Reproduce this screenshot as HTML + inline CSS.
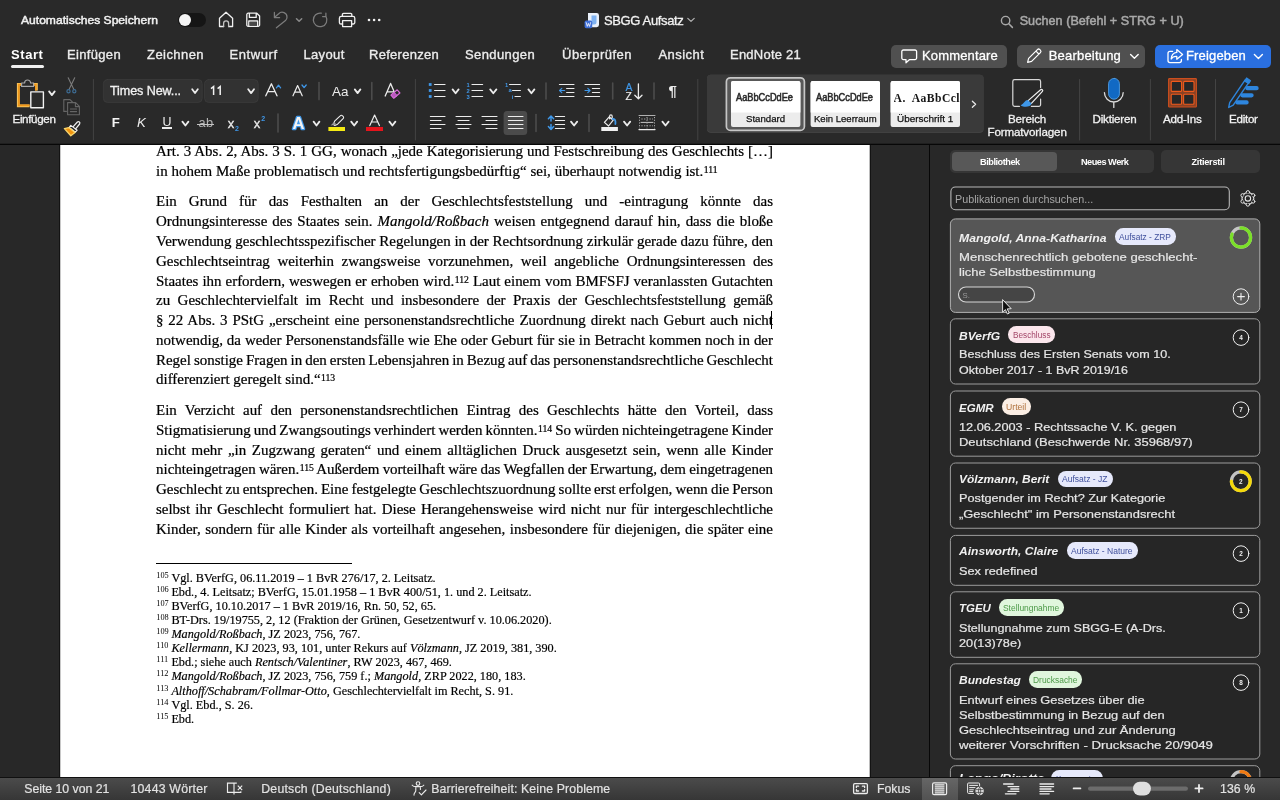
<!DOCTYPE html>
<html lang="de"><head><meta charset="utf-8"><title>SBGG Aufsatz</title>
<style>

*{box-sizing:border-box}
html,body{margin:0;padding:0}
body{will-change:transform;width:1280px;height:800px;overflow:hidden;position:relative;background:#292929;font-family:"Liberation Sans",sans-serif;color:#fff}
.t{position:absolute;white-space:pre;line-height:1;display:block}
.a{position:absolute;display:block}
svg{position:absolute;left:0;top:0;overflow:visible}
.ln{position:absolute;left:156px;width:617px;height:19.78px;line-height:19.78px;font-family:"Liberation Serif",serif;font-size:14.96px;color:#000;white-space:nowrap;-webkit-text-stroke:0.22px #000}
.ln sup{font-size:9.7px;line-height:0;vertical-align:baseline;position:relative;top:-2.8px;margin-left:.5px}
.fn{position:absolute;left:171.4px;height:14.1px;line-height:14.1px;font-family:"Liberation Serif",serif;font-size:12.24px;color:#000;white-space:pre;-webkit-text-stroke:0.18px #000}
.fnn{position:absolute;left:156.3px;font-family:"Liberation Serif",serif;font-size:8.3px;line-height:1;color:#000}
.card{position:absolute;left:949.75px;width:310px;border:1px solid #9a9a9a;border-radius:5px;background:#262626}
.badge{position:absolute;height:16.5px;border-radius:8.25px}

</style></head>
<body>
<div class="a" style="left:0;top:0;width:1280px;height:143px;background:#292929"></div>
<span class="t" style="left:21.00px;top:15px;font-size:11.3px;transform:scaleX(1.0694);transform-origin:0 0;-webkit-text-stroke:0.45px;color:#f2f2f2;">Automatisches Speichern</span>
<span class="t" style="left:604.00px;top:14px;font-size:13px;letter-spacing:-0.369px;-webkit-text-stroke:0.3px;color:#f2f2f2;">SBGG Aufsatz</span>
<span class="t" style="left:1019.70px;top:15px;font-size:12.6px;letter-spacing:0.037px;-webkit-text-stroke:0.5px;color:#a8a8a8;">Suchen (Befehl + STRG + U)</span>
<span class="t" style="left:11.00px;top:48px;font-size:13px;font-weight:bold;letter-spacing:0.575px;color:#fff;">Start</span>
<span class="t" style="left:67.00px;top:48px;font-size:13px;letter-spacing:0.334px;-webkit-text-stroke:0.35px;color:#ececec;">Einfügen</span>
<span class="t" style="left:147.00px;top:48px;font-size:13px;letter-spacing:0.439px;-webkit-text-stroke:0.35px;color:#ececec;">Zeichnen</span>
<span class="t" style="left:229.40px;top:48px;font-size:13px;letter-spacing:0.617px;-webkit-text-stroke:0.35px;color:#ececec;">Entwurf</span>
<span class="t" style="left:303.40px;top:48px;font-size:13px;letter-spacing:0.376px;-webkit-text-stroke:0.35px;color:#ececec;">Layout</span>
<span class="t" style="left:369.00px;top:48px;font-size:13px;letter-spacing:0.278px;-webkit-text-stroke:0.35px;color:#ececec;">Referenzen</span>
<span class="t" style="left:465.00px;top:48px;font-size:13px;letter-spacing:0.387px;-webkit-text-stroke:0.35px;color:#ececec;">Sendungen</span>
<span class="t" style="left:562.00px;top:48px;font-size:13px;letter-spacing:0.495px;-webkit-text-stroke:0.35px;color:#ececec;">Überprüfen</span>
<span class="t" style="left:658.40px;top:48px;font-size:13px;letter-spacing:0.480px;-webkit-text-stroke:0.35px;color:#ececec;">Ansicht</span>
<span class="t" style="left:730.00px;top:48px;font-size:13px;letter-spacing:0.233px;-webkit-text-stroke:0.35px;color:#ececec;">EndNote 21</span>
<div class="a" style="left:11px;top:65px;width:33px;height:3px;border-radius:1.5px;background:#f0f0f0"></div>
<div class="a" style="left:891px;top:44.5px;width:115.5px;height:23px;border-radius:5px;background:#505050"></div>
<div class="a" style="left:1017px;top:44.5px;width:128px;height:23px;border-radius:5px;background:#505050"></div>
<div class="a" style="left:1155px;top:44.5px;width:115.5px;height:23px;border-radius:5px;background:#2a6fdf"></div>
<span class="t" style="left:922.00px;top:49px;font-size:13px;letter-spacing:0.158px;-webkit-text-stroke:0.3px;color:#fff;">Kommentare</span>
<span class="t" style="left:1048.75px;top:49px;font-size:13px;letter-spacing:0.193px;-webkit-text-stroke:0.3px;color:#fff;">Bearbeitung</span>
<span class="t" style="left:1186.00px;top:49px;font-size:13px;letter-spacing:0.161px;-webkit-text-stroke:0.3px;color:#fff;">Freigeben</span>
<svg width="1280" height="75" viewBox="0 0 1280 75" fill="none" stroke-linecap="round" stroke-linejoin="round"><rect x="178" y="13" width="28" height="14" rx="7" fill="#151515"/><circle cx="185" cy="20" r="6" fill="#f4f4f4"/><path d="M223.6 26.5 H219.5 V18.2 L226 12.2 L232.6 18.2 V26.5 H228.6" stroke="#f0f0f0" stroke-width="1.3"/><path d="M223.6 26.5 V23.4 a2.5 2.5 0 0 1 5 0 V26.5" stroke="#c4c4c4" stroke-width="1.3"/><path d="M246.8 14.6 a1.4 1.4 0 0 1 1.4 -1.4 H256.8 L259.6 16 V24.9 a1.4 1.4 0 0 1 -1.4 1.4 H248.2 a1.4 1.4 0 0 1 -1.4 -1.4 Z M249.4 13.4 V17.4 H256.2 V13.4 M248.8 26.2 V21 H257.6 V26.2" stroke="#f0f0f0" stroke-width="1.3"/><rect x="249.6" y="21.8" width="7.2" height="3.8" fill="#484848"/><path d="M274.4 12.4 V17.5 H279.6 M274.6 17.3 L278.7 13.7 A4.8 4.8 0 0 1 287 17.2 A4.8 4.8 0 0 1 285.5 20.6 L276.4 27.8" stroke="#7c7c7c" stroke-width="1.25"/><path d="M296.5 18.7 L299.1 21.3 L301.7 18.7" stroke="#8a8a8a" stroke-width="1.5"/><path d="M326 16.5 A6.8 6.8 0 1 1 321.3 13.2 M325.9 13.2 V16.5 H322.6" stroke="#7c7c7c" stroke-width="1.25"/><path d="M342.4 16.4 V14.6 a1.2 1.2 0 0 1 1.2 -1.2 H350.6 a1.2 1.2 0 0 1 1.2 1.2 V16.4 M342.6 24 H341 a1.6 1.6 0 0 1 -1.6 -1.6 V18.2 a1.8 1.8 0 0 1 1.8 -1.8 H353 a1.8 1.8 0 0 1 1.8 1.8 V22.4 a1.6 1.6 0 0 1 -1.6 1.6 H351.6 M342.6 20.6 H351.6 V26.6 H342.6 Z" stroke="#f0f0f0" stroke-width="1.3"/><circle cx="369" cy="20" r="1.3" fill="#f0f0f0"/><circle cx="374.1" cy="20" r="1.3" fill="#f0f0f0"/><circle cx="379.2" cy="20" r="1.3" fill="#f0f0f0"/><path d="M588 13 h8.6 a2.4 2.4 0 0 1 2.4 2.4 v9.4 a2.4 2.4 0 0 1 -2.4 2.4 h-8.6 Z" fill="#eaf1fb"/><path d="M591.5 15.5 h5 v6.5 a2.5 2.5 0 0 1 -2.5 2.5 h-2.5 Z" fill="#7fb2f0"/><rect x="584.6" y="20.6" width="7.6" height="7.6" rx="1.6" fill="#3f6fd8"/><path d="M586.2 22.6 L587.3 26.4 L588.4 23.4 L589.5 26.4 L590.6 22.6" stroke="#fff" stroke-width="0.8"/><path d="M687.8 18.4 L691 21.4 L694.2 18.4" stroke="#b0b0b0" stroke-width="1.3"/><circle cx="1005.6" cy="20.6" r="4.2" stroke="#a8a8a8" stroke-width="1.4"/><path d="M1008.8 23.8 L1012.4 27.4" stroke="#a8a8a8" stroke-width="1.5"/><path d="M903.4 50 H915 a1.6 1.6 0 0 1 1.6 1.6 V58 a1.6 1.6 0 0 1 -1.6 1.6 H909.6 L906 62.8 V59.6 H903.4 a1.6 1.6 0 0 1 -1.6 -1.6 V51.6 a1.6 1.6 0 0 1 1.6 -1.6 Z" stroke="#fff" stroke-width="1.3"/><path d="M1027.6 62.4 L1028.6 58.4 L1037.4 49.6 a1.7 1.7 0 0 1 2.4 0 L1040.4 50.2 a1.7 1.7 0 0 1 0 2.4 L1031.6 61.4 Z M1036 51.2 L1038.8 54" stroke="#fff" stroke-width="1.2"/><path d="M1130.6 54.6 L1134.4 58.2 L1138.2 54.6" stroke="#fff" stroke-width="1.4"/><path d="M1172.6 51.4 H1170 a2 2 0 0 0 -2 2 V60.6 a2 2 0 0 0 2 2 H1179.4 a2 2 0 0 0 2 -2 V59.4" stroke="#fff" stroke-width="1.3"/><path d="M1176.8 49.6 L1182.6 54.4 L1176.8 59.2 V56.4 C1174.2 56.2 1172.4 57 1171.2 59 C1171.4 55.2 1173.4 52.8 1176.8 52.4 Z" stroke="#fff" stroke-width="1.3"/><path d="M1254.4 54.6 L1258.4 58.4 L1262.4 54.6" stroke="#fff" stroke-width="1.4"/></svg>
<svg width="1280" height="145" viewBox="0 0 1280 145" fill="none" stroke-linecap="round" stroke-linejoin="round"><path d="M93.4 79.5 V140" stroke="#444" stroke-width="1"/><path d="M415.4 79.5 V140" stroke="#444" stroke-width="1"/><path d="M697.8 79.5 V140" stroke="#444" stroke-width="1"/><path d="M1079.6 79.5 V140" stroke="#444" stroke-width="1"/><path d="M1150.4 79.5 V140" stroke="#444" stroke-width="1"/><path d="M1215.5 79.5 V140" stroke="#444" stroke-width="1"/><path d="M319 82.6 V99.6" stroke="#4c4c4c" stroke-width="1.6"/><path d="M371.8 82.6 V99.6" stroke="#4c4c4c" stroke-width="1.6"/><path d="M278 114 V132" stroke="#4c4c4c" stroke-width="1.6"/><path d="M546 83 V99" stroke="#4c4c4c" stroke-width="1.6"/><path d="M612.7 83 V99" stroke="#4c4c4c" stroke-width="1.6"/><path d="M654 83 V99" stroke="#4c4c4c" stroke-width="1.6"/><path d="M536 114.5 V131.5" stroke="#4c4c4c" stroke-width="1.6"/><path d="M589 114.5 V131.5" stroke="#4c4c4c" stroke-width="1.6"/><path d="M21.6 84.3 H18.3 V105.8 H29.6 M33.6 84.3 H36.4 V90.6" stroke="#f7c45c" stroke-width="2.8" stroke-linecap="butt" stroke-linejoin="miter"/><path d="M21.6 84.7 H18.8 V105.3 H29.6 M33.6 84.7 H35.9 V90.6" stroke="#f0961a" stroke-width="1.7" stroke-linecap="butt" stroke-linejoin="miter"/><path d="M21.6 86.4 V83 H24.6 a3 3 0 0 1 6 0 H33.6 V86.4 Z" fill="#292929" stroke="#a8a8a8" stroke-width="1.2"/><rect x="30.8" y="91.9" width="12.6" height="15.8" fill="#2c2c2c" stroke="#f2f2f2" stroke-width="1.4"/><path d="M49.1 91.4 L51.9 95.1 L54.699999999999996 91.4" stroke="#ececec" stroke-width="1.8"/><path d="M68.2 77.8 L73.9 89.4 M74.7 77.8 L69 89.4" stroke="#7c7c7c" stroke-width="1.1"/><circle cx="68.5" cy="91.3" r="1.6" stroke="#3d6c94" stroke-width="1.2"/><circle cx="74.3" cy="91.3" r="1.6" stroke="#3d6c94" stroke-width="1.2"/><path d="M66.4 111.4 H63.8 V99.6 H70 L72.4 102" stroke="#666" stroke-width="1.1"/><path d="M67.6 102.6 H75.6 L79.4 106.4 V114.8 H67.6 Z M75.4 102.8 V106.6 H79.2 M70.4 109 H76.6 M70.4 111.6 H76.6" stroke="#666" stroke-width="1.1"/><path d="M73.2 126.6 L77.4 122 a1.5 1.5 0 0 1 2.2 2 L75.6 128.8" stroke="#f2f2f2" stroke-width="1.2"/><path d="M70.8 125.4 L77.2 130.2 L75.4 132.2 L69.2 127.4 Z" stroke="#f2f2f2" stroke-width="1.1"/><path d="M68.8 127.6 L75 132.4 L70.8 135.8 L64.4 128.6 Z" fill="#f0930f" stroke="#f8d66c" stroke-width="1.3"/><rect x="103.4" y="79.6" width="98.8" height="22.8" rx="4" fill="#323232" stroke="#3c3c3c" stroke-width="0.8"/><rect x="204.6" y="79.6" width="53.6" height="22.8" rx="4" fill="#323232" stroke="#3c3c3c" stroke-width="0.8"/><path d="M192.2 89.2 L195.0 93.1 L197.8 89.2" stroke="#ececec" stroke-width="1.8"/><path d="M248.2 89.2 L251.1 93.1 L254.0 89.2" stroke="#ececec" stroke-width="1.8"/><path d="M211 88.6 L213.6 86.6 V95 M217.6 88.6 L220.2 86.6 V95" stroke="#f2f2f2" stroke-width="1.5" stroke-linejoin="miter" stroke-linecap="butt"/><path d="M265.8 95.8 L271.4 83.8 L277 95.8 M267.8 91.6 H275" stroke="#ececec" stroke-width="1.3"/><path d="M276.4 87.8 L278.5 85.2 L280.6 87.8" stroke="#3f97e8" stroke-width="1.3"/><path d="M293 95.8 L297.6 85.6 L302.2 95.8 M294.6 92.2 H300.6" stroke="#ececec" stroke-width="1.2"/><path d="M302 85 L304.1 87.6 L306.2 85" stroke="#3f97e8" stroke-width="1.3"/><path d="M354.8 89.4 L357.6 93.1 L360.40000000000003 89.4" stroke="#ececec" stroke-width="1.8"/><path d="M385.2 96 L390.6 83.4 L396 96 M387.2 91.8 H394" stroke="#ececec" stroke-width="1.3"/><path d="M397.2 89.8 L399.9 93 L393.7 98.2 L391.1 95.2 Z" fill="#292929" stroke="#d86ad8" stroke-width="1.2"/><path d="M394.3 92.5 L397 95.5 L393.7 98.2 L391.1 95.2 Z" fill="#b95abf" stroke="#d86ad8" stroke-width="1"/><text x="298.6" y="128.9" text-anchor="middle" font-family="Liberation Sans" font-weight="bold" font-size="16.6" fill="#f4f4f4" stroke="#3f97e8" stroke-width="2.4" paint-order="stroke" stroke-linejoin="round">A</text><path d="M313.59999999999997 121.6 L316.5 125.5 L319.40000000000003 121.6" stroke="#ececec" stroke-width="1.8"/><rect x="328.4" y="127" width="16.6" height="4" fill="#f5ea14"/><path d="M333.4 124.6 L334.6 121.2 L340.2 115.8 a1.6 1.6 0 0 1 2.3 0 l0.6 0.6 a1.6 1.6 0 0 1 0 2.3 L337.6 124.2 L334.8 125.4 Z" stroke="#ececec" stroke-width="1.1"/><path d="M330.6 125.6 L334 122 L336.6 124.6 Z" fill="#9a9a9a"/><path d="M351.2 121.6 L354.2 125.5 L357.2 121.6" stroke="#ececec" stroke-width="1.8"/><rect x="366" y="127" width="17" height="4" fill="#e5141c"/><path d="M369.8 125.6 L374.6 115 L379.4 125.6 M371.6 122 H377.6" stroke="#ececec" stroke-width="1.2"/><path d="M389.4 121.6 L392.4 125.5 L395.40000000000003 121.6" stroke="#ececec" stroke-width="1.8"/><path d="M182.39999999999998 121.6 L185.39999999999998 125.5 L188.4 121.6" stroke="#ececec" stroke-width="1.8"/><rect x="428.8" y="83.1" width="2.8" height="2.8" fill="#3f97e8"/><path d="M434.6 84.5 H445" stroke="#ececec" stroke-width="1.2"/><path d="M472 84.5 H482.6" stroke="#ececec" stroke-width="1.2"/><rect x="428.8" y="89.1" width="2.8" height="2.8" fill="#3f97e8"/><path d="M434.6 90.5 H445" stroke="#ececec" stroke-width="1.2"/><path d="M472 90.5 H482.6" stroke="#ececec" stroke-width="1.2"/><rect x="428.8" y="95.1" width="2.8" height="2.8" fill="#3f97e8"/><path d="M434.6 96.5 H445" stroke="#ececec" stroke-width="1.2"/><path d="M472 96.5 H482.6" stroke="#ececec" stroke-width="1.2"/><path d="M452.59999999999997 89.4 L455.6 93.3 L458.6 89.4" stroke="#ececec" stroke-width="1.8"/><path d="M490.2 89.4 L493.3 93.3 L496.40000000000003 89.4" stroke="#ececec" stroke-width="1.8"/><path d="M528.4000000000001 89.4 L531.4000000000001 93.3 L534.4 89.4" stroke="#ececec" stroke-width="1.8"/><path d="M509.6 84.5 H520.4 M512.6 90.5 H520.4 M515 96.5 H520.4" stroke="#ececec" stroke-width="1.2"/><path d="M559.4 84.5 H574 M566.6 88.5 H574 M566.6 92.5 H574 M559.4 96.5 H574" stroke="#ececec" stroke-width="1.1"/><path d="M564.6 90.5 H559.6 M561.8 88.4 L559.6 90.5 L561.8 92.6" stroke="#3f97e8" stroke-width="1.2"/><path d="M585 84.5 H599.6 M592.4 88.5 H599.6 M592.4 92.5 H599.6 M585 96.5 H599.6" stroke="#ececec" stroke-width="1.1"/><path d="M585 90.5 H590 M587.8 88.4 L590 90.5 L587.8 92.6" stroke="#3f97e8" stroke-width="1.2"/><path d="M638.4 84 V98.6 M634.8 95.2 L638.4 98.8 L642 95.2" stroke="#ececec" stroke-width="1.3"/><path d="M430.4 116.5 H445 M430.4 120.5 H441 M430.4 124.5 H445 M430.4 128.5 H441" stroke="#ececec" stroke-width="1.1"/><path d="M456 116.5 H471 M458.0 120.5 H469.0 M456 124.5 H471 M458.0 128.5 H469.0" stroke="#ececec" stroke-width="1.1"/><path d="M482 116.5 H497 M486 120.5 H497 M482 124.5 H497 M486 128.5 H497" stroke="#ececec" stroke-width="1.1"/><rect x="503.6" y="111" width="23.6" height="24" rx="3.5" fill="#4b4b4b"/><path d="M508.4 116.5 H523 M508.4 120.5 H523 M508.4 124.5 H523 M508.4 128.5 H523" stroke="#ececec" stroke-width="1.1"/><path d="M555.4 116.5 H564.6 M555.4 120.5 H564.6 M555.4 124.5 H564.6 M555.4 128.5 H564.6" stroke="#ececec" stroke-width="1.1"/><path d="M551 116.2 V121 M548.4 118.8 L551 116 L553.6 118.8 M551 124.4 V129.2 M548.4 126.6 L551 129.4 L553.6 126.6" stroke="#3f97e8" stroke-width="1.5"/><path d="M571.0 121.6 L574.0999999999999 125.5 L577.1999999999999 121.6" stroke="#ececec" stroke-width="1.8"/><rect x="601.3" y="127" width="16.6" height="4" fill="#f0f0f0"/><path d="M604.4 122.4 L609.2 116.8 L613.2 120.2 L608.6 126 Z M609.6 118.8 V116.2 a1.3 1.3 0 0 1 2.6 0 V119.6" stroke="#ececec" stroke-width="1.2"/><path d="M612.8 119 C615 118.6 615.8 121 615.4 124" stroke="#3f97e8" stroke-width="1.8"/><path d="M624.0 121.6 L627.0999999999999 125.5 L630.1999999999999 121.6" stroke="#ececec" stroke-width="1.8"/><path d="M639 129.6 H655" stroke="#ececec" stroke-width="1.4"/><path d="M639 115.5 H655" stroke="#b0b0b0" stroke-width="1"/><path d="M641 122.4 H653" stroke="#c8c8c8" stroke-width="1"/><path d="M639.5 117 V128.4 M647 117 V128.4 M654.5 117 V128.4 M641.4 119 H653 M641.4 125.8 H653" stroke="#a8a8a8" stroke-width="1" stroke-dasharray="1.2 1.5" stroke-linecap="butt"/><path d="M662.4000000000001 121.6 L665.5 125.5 L668.5999999999999 121.6" stroke="#ececec" stroke-width="1.8"/><rect x="707" y="74.8" width="276.6" height="58" rx="4" fill="#4a4a4a"/><rect x="707" y="74.8" width="276.6" height="57.2" rx="4" fill="#3a3a3a"/><rect x="726.4" y="77.8" width="78" height="52.6" rx="4" fill="#585858" stroke="#c6c6c6" stroke-width="1.7"/><rect x="731" y="80.9" width="69.4" height="46" rx="2" fill="#ececec"/><path d="M731 112.4 V82.9 a2 2 0 0 1 2 -2 H798.4 a2 2 0 0 1 2 2 V112.4 Z" fill="#fff"/><rect x="810.6" y="80.9" width="69.4" height="46" rx="2" fill="#ececec"/><path d="M810.6 112.4 V82.9 a2 2 0 0 1 2 -2 H878.0 a2 2 0 0 1 2 2 V112.4 Z" fill="#fff"/><rect x="890.6" y="80.9" width="69.4" height="46" rx="2" fill="#ececec"/><path d="M890.6 112.4 V82.9 a2 2 0 0 1 2 -2 H958.0 a2 2 0 0 1 2 2 V112.4 Z" fill="#fff"/><path d="M972.4 101.2 L975.6 104.2 L972.4 107.2" stroke="#e8e8e8" stroke-width="1.3"/><path d="M1040.6 87.6 V81.4 a1.8 1.8 0 0 0 -1.8 -1.8 H1014.6 a1.8 1.8 0 0 0 -1.8 1.8 V104.6 a1.8 1.8 0 0 0 1.8 1.8 H1019.4 M1031.4 106.4 H1038.8 a1.8 1.8 0 0 0 1.8 -1.8 V99" stroke="#d8d8d8" stroke-width="1.2"/><path d="M1028.4 100.4 L1040.6 89.8 a1.2 1.2 0 0 1 1.8 1.6 L1031.4 103.4" stroke="#f0f0f0" stroke-width="1.2"/><path d="M1027.8 100 C1024.8 100 1024.4 103.4 1020.6 105.4 C1024.6 107.8 1031 106.8 1031.6 103.4 Z" fill="#3f97e8"/><rect x="1108.6" y="78.4" width="10.8" height="20.8" rx="5.4" fill="#1169c4" stroke="#4f9fe8" stroke-width="0.9"/><path d="M1104.4 92.6 a9.4 9.4 0 0 0 18.8 0 M1113.8 102.2 V107.4" stroke="#dcdcdc" stroke-width="1.3"/><rect x="1168.6" y="78.6" width="27.8" height="28.4" rx="0.8" fill="#8a4224" stroke="#cc4e1e" stroke-width="1.1"/><rect x="1171.2" y="81.4" width="10.4" height="10" rx="1" fill="#272727" stroke="#f05a1c" stroke-width="1.1"/><rect x="1183.6" y="81.4" width="10.4" height="10" rx="1" fill="#272727" stroke="#f05a1c" stroke-width="1.1"/><rect x="1171.2" y="94.2" width="10.4" height="10" rx="1" fill="#272727" stroke="#f05a1c" stroke-width="1.1"/><rect x="1183.6" y="94.2" width="10.4" height="10" rx="1" fill="#272727" stroke="#f05a1c" stroke-width="1.1"/><path d="M1247.4 88.2 H1256.6 M1242.4 95.3 H1251.6 M1237.4 102.4 H1246.6" stroke="#2e86de" stroke-width="4.2"/><path d="M1245 80.2 L1229.7 102.6 L1228.7 107.5 L1233.2 105.2 L1248.7 82.7 Z" fill="#282828" stroke="#2e86de" stroke-width="1.4" stroke-linejoin="round"/><path d="M1246.6 78 L1250.5 80.7 L1248.6 83.6 L1244.6 80.9 Z" fill="#2e86de" stroke="#2e86de" stroke-width="1.2" stroke-linejoin="round"/></svg>
<span class="t" style="left:12.50px;top:113px;font-size:11.6px;letter-spacing:-0.348px;-webkit-text-stroke:0.3px;color:#f2f2f2;">Einfügen</span>
<span class="t" style="left:110.00px;top:85px;font-size:12.6px;letter-spacing:-0.109px;-webkit-text-stroke:0.3px;color:#f2f2f2;">Times New...</span>
<span class="t" style="left:332.00px;top:85px;font-size:13.4px;letter-spacing:0.005px;color:#ececec;">Aa</span>
<span class="t" style="left:111.70px;top:116px;font-size:13.2px;font-weight:bold;color:#f4f4f4;">F</span>
<span class="t" style="left:137.00px;top:116px;font-size:13.2px;font-style:italic;color:#ececec;">K</span>
<span class="t" style="left:162.40px;top:116px;font-size:12.4px;color:#ececec;">U</span>
<div class="a" style="left:162.2px;top:127.4px;width:9.6px;height:1.2px;background:#ececec"></div>
<span class="t" style="left:198.40px;top:117px;font-size:12.8px;letter-spacing:0.383px;color:#b4b4b4;">ab</span>
<div class="a" style="left:197px;top:123.5px;width:17.2px;height:1.1px;background:#c4c4c4"></div>
<span class="t" style="left:227.70px;top:117px;font-size:13px;-webkit-text-stroke:0.3px;color:#ececec;">x</span>
<span class="t" style="left:235.00px;top:125px;font-size:7px;font-weight:bold;color:#3f97e8;">2</span>
<span class="t" style="left:253.80px;top:117px;font-size:13px;-webkit-text-stroke:0.3px;color:#ececec;">x</span>
<span class="t" style="left:261.20px;top:115px;font-size:7px;font-weight:bold;color:#3f97e8;">2</span>
<span class="t" style="left:466.60px;top:83px;font-size:5.8px;font-weight:bold;color:#3f97e8;">1</span>
<span class="t" style="left:466.60px;top:89px;font-size:5.8px;font-weight:bold;color:#3f97e8;">2</span>
<span class="t" style="left:466.60px;top:95px;font-size:5.8px;font-weight:bold;color:#3f97e8;">3</span>
<span class="t" style="left:505.00px;top:83px;font-size:5.8px;font-weight:bold;color:#3f97e8;">1</span>
<span class="t" style="left:508.40px;top:88px;font-size:5.8px;font-weight:bold;color:#3f97e8;">a</span>
<span class="t" style="left:511.80px;top:95px;font-size:5.8px;font-weight:bold;color:#3f97e8;">i</span>
<span class="t" style="left:625.40px;top:83px;font-size:10.4px;-webkit-text-stroke:0.2px;color:#3f97e8;">A</span>
<span class="t" style="left:625.60px;top:92px;font-size:10.4px;-webkit-text-stroke:0.2px;color:#ececec;">Z</span>
<span class="t" style="left:668.60px;top:83px;font-size:15px;font-weight:bold;color:#ececec;">¶</span>
<span class="t" style="left:736.40px;top:93px;font-size:10.3px;transform:scaleX(0.8972);transform-origin:0 0;-webkit-text-stroke:0.55px;color:#2a2a2a;">AaBbCcDdEe</span>
<span class="t" style="left:816.00px;top:93px;font-size:10.3px;transform:scaleX(0.8972);transform-origin:0 0;-webkit-text-stroke:0.55px;color:#2a2a2a;">AaBbCcDdEe</span>
<span class="t" style="left:893.60px;top:93px;font-size:11.6px;font-family:'Liberation Serif',serif;font-weight:bold;letter-spacing:0.443px;color:#161616;width:66.4px;overflow:hidden;">A.  AaBbCcl</span>
<span class="t" style="left:745.70px;top:114px;font-size:9.6px;transform:scaleX(1.0042);transform-origin:0 0;-webkit-text-stroke:0.25px;color:#111;">Standard</span>
<span class="t" style="left:813.80px;top:114px;font-size:9.6px;transform:scaleX(0.9946);transform-origin:0 0;-webkit-text-stroke:0.25px;color:#111;">Kein Leerraum</span>
<span class="t" style="left:897.40px;top:114px;font-size:9.6px;transform:scaleX(1.0333);transform-origin:0 0;-webkit-text-stroke:0.25px;color:#111;">Überschrift 1</span>
<span class="t" style="left:1008.00px;top:113px;font-size:11.6px;letter-spacing:-0.188px;-webkit-text-stroke:0.3px;color:#f2f2f2;">Bereich</span>
<span class="t" style="left:987.50px;top:126px;font-size:11.6px;letter-spacing:-0.143px;-webkit-text-stroke:0.3px;color:#f2f2f2;">Formatvorlagen</span>
<span class="t" style="left:1092.50px;top:113px;font-size:11.6px;letter-spacing:-0.194px;-webkit-text-stroke:0.3px;color:#f2f2f2;">Diktieren</span>
<span class="t" style="left:1163.00px;top:113px;font-size:11.6px;letter-spacing:-0.210px;-webkit-text-stroke:0.3px;color:#f2f2f2;">Add-Ins</span>
<span class="t" style="left:1229.00px;top:113px;font-size:11.6px;letter-spacing:-0.266px;-webkit-text-stroke:0.3px;color:#f2f2f2;">Editor</span>
<div class="a" style="left:0;top:143px;width:1280px;height:2px;background:#070707;border-top:1px solid #1f1f1f"></div>
<div class="a" style="left:0;top:145px;width:929.5px;height:632px;background:#282828"></div>
<div class="a" style="left:59px;top:145px;width:812px;height:632px;background:#fff;border-left:1px solid #131313;border-right:1px solid #131313;box-shadow:inset 1px 0 0 #c8c8c8,inset -1px 0 0 #bcbcbc"></div>
<div class="ln" style="top:141.80px;word-spacing:0.252px;">Art. 3 Abs. 2, Abs. 3 S. 1 GG, wonach „jede Kategorisierung und Festschreibung des Geschlechts […]</div>
<div class="ln" style="top:161.80px;word-spacing:0.13px;">in hohem Maße problematisch und rechtsfertigungsbedürftig“ sei, überhaupt notwendig ist.<sup>111</sup></div>
<div class="ln" style="top:191.80px;word-spacing:8.335px;">Ein Grund für das Festhalten an der Geschlechtsfeststellung und -eintragung könnte das</div>
<div class="ln" style="top:211.80px;word-spacing:1.311px;">Ordnungsinteresse des Staates sein. <i>Mangold/Roßbach</i> weisen entgegnend darauf hin, dass die bloße</div>
<div class="ln" style="top:231.80px;word-spacing:-0.042px;">Verwendung geschlechtsspezifischer Regelungen in der Rechtsordnung zirkulär gerade dazu führe, den</div>
<div class="ln" style="top:251.80px;word-spacing:3.911px;">Geschlechtseintrag weiterhin zwangsweise vorzunehmen, weil angebliche Ordnungsinteressen des</div>
<div class="ln" style="top:271.80px;word-spacing:0.293px;">Staates ihn erfordern, weswegen er erhoben wird.<sup>112</sup> Laut einem vom BMFSFJ veranlassten Gutachten</div>
<div class="ln" style="top:290.80px;word-spacing:3.733px;">zu Geschlechtervielfalt im Recht und insbesondere der Praxis der Geschlechtsfeststellung gemäß</div>
<div class="ln" style="top:310.80px;word-spacing:1.144px;">§ 22 Abs. 3 PStG „erscheint eine personenstandsrechtliche Zuordnung direkt nach Geburt auch nicht</div>
<div class="ln" style="top:330.80px;word-spacing:0.218px;">notwendig, da weder Personenstandsfälle wie Ehe oder Geburt für sie in Betracht kommen noch in der</div>
<div class="ln" style="top:350.80px;word-spacing:-0.695px;">Regel sonstige Fragen in den ersten Lebensjahren in Bezug auf das personenstandsrechtliche Geschlecht</div>
<div class="ln" style="top:369.80px;">differenziert geregelt sind.“<sup>113</sup></div>
<div class="ln" style="top:400.80px;word-spacing:4.601px;">Ein Verzicht auf den personenstandsrechtlichen Eintrag des Geschlechts hätte den Vorteil, dass</div>
<div class="ln" style="top:420.80px;word-spacing:-0.627px;">Stigmatisierung und Zwangsoutings verhindert werden könnten.<sup>114</sup> So würden nichteingetragene Kinder</div>
<div class="ln" style="top:440.80px;word-spacing:1.916px;">nicht mehr „in Zugzwang geraten“ und einem alltäglichen Druck ausgesetzt sein, wenn alle Kinder</div>
<div class="ln" style="top:459.80px;word-spacing:-0.487px;">nichteingetragen wären.<sup>115</sup> Außerdem vorteilhaft wäre das Wegfallen der Erwartung, dem eingetragenen</div>
<div class="ln" style="top:479.80px;word-spacing:-0.643px;">Geschlecht zu entsprechen. Eine festgelegte Geschlechtszuordnung sollte erst erfolgen, wenn die Person</div>
<div class="ln" style="top:499.80px;word-spacing:1.457px;">selbst ihr Geschlecht formuliert hat. Diese Herangehensweise wird nicht nur für intergeschlechtliche</div>
<div class="ln" style="top:519.80px;word-spacing:0.811px;">Kinder, sondern für alle Kinder als vorteilhaft angesehen, insbesondere für diejenigen, die später eine</div>
<div class="a" style="left:771px;top:311px;width:1px;height:17.5px;background:#000"></div>
<div class="a" style="left:156px;top:563px;width:196px;height:1px;background:#000"></div>
<div class="fn" style="top:570.87px">Vgl. BVerfG, 06.11.2019 – 1 BvR 276/17, 2. Leitsatz.</div>
<div class="fnn" style="top:572.30px">105</div>
<div class="fn" style="top:584.87px">Ebd., 4. Leitsatz; BVerfG, 15.01.1958 – 1 BvR 400/51, 1. und 2. Leitsatz.</div>
<div class="fnn" style="top:586.30px">106</div>
<div class="fn" style="top:598.87px">BVerfG, 10.10.2017 – 1 BvR 2019/16, Rn. 50, 52, 65.</div>
<div class="fnn" style="top:600.30px">107</div>
<div class="fn" style="top:612.87px">BT-Drs. 19/19755, 2, 12 (Fraktion der Grünen, Gesetzentwurf v. 10.06.2020).</div>
<div class="fnn" style="top:614.30px">108</div>
<div class="fn" style="top:626.87px"><i>Mangold/Roßbach</i>, JZ 2023, 756, 767.</div>
<div class="fnn" style="top:628.30px">109</div>
<div class="fn" style="top:640.87px"><i>Kellermann</i>, KJ 2023, 93, 101, unter Rekurs auf <i>Völzmann</i>, JZ 2019, 381, 390.</div>
<div class="fnn" style="top:642.30px">110</div>
<div class="fn" style="top:654.87px">Ebd.; siehe auch <i>Rentsch/Valentiner</i>, RW 2023, 467, 469.</div>
<div class="fnn" style="top:656.30px">111</div>
<div class="fn" style="top:668.87px"><i>Mangold/Roßbach</i>, JZ 2023, 756, 759 f.; <i>Mangold</i>, ZRP 2022, 180, 183.</div>
<div class="fnn" style="top:670.30px">112</div>
<div class="fn" style="top:683.87px"><i>Althoff/Schabram/Follmar-Otto,</i> Geschlechtervielfalt im Recht, S. 91.</div>
<div class="fnn" style="top:685.30px">113</div>
<div class="fn" style="top:697.87px">Vgl. Ebd., S. 26.</div>
<div class="fnn" style="top:699.30px">114</div>
<div class="fn" style="top:711.87px">Ebd.</div>
<div class="fnn" style="top:713.30px">115</div>
<div class="a" style="left:929px;top:145px;width:351px;height:632px;background:#282828;border-left:1px solid #070707"></div>
<div class="a" style="left:950px;top:150.3px;width:204px;height:22.5px;border-radius:5px;background:#363636"></div>
<div class="a" style="left:952.2px;top:152.2px;width:104.7px;height:18.8px;border-radius:4px;background:#585858"></div>
<div class="a" style="left:1161px;top:150.3px;width:98.8px;height:22.5px;border-radius:5px;background:#363636"></div>
<span class="t" style="left:980.00px;top:158px;font-size:9.2px;font-weight:bold;letter-spacing:-0.467px;color:#fff;">Bibliothek</span>
<span class="t" style="left:1080.90px;top:158px;font-size:9.2px;font-weight:bold;letter-spacing:-0.484px;color:#fff;">Neues Werk</span>
<span class="t" style="left:1191.50px;top:158px;font-size:9.2px;font-weight:bold;letter-spacing:-0.255px;color:#fff;">Zitierstil</span>
<svg width="1280" height="800" viewBox="0 0 1280 800" fill="none"><rect x="950.9" y="187" width="278.4" height="22.8" rx="4.5" fill="#232323" stroke="#b8b8b8" stroke-width="1.1"/></svg>
<span class="t" style="left:955.25px;top:194px;font-size:10.6px;transform:scaleX(1.0155);transform-origin:0 0;color:#a6a6a6;">Publikationen durchsuchen...</span>
<svg width="1280" height="800" viewBox="0 0 1280 800" fill="none"><rect x="950.4" y="218.9" width="309.4" height="93.50" rx="5" fill="#565656" stroke="#b0b0b0" stroke-width="1"/><rect x="950.4" y="318.8" width="309.4" height="65.20" rx="5" fill="#262626" stroke="#9c9c9c" stroke-width="1"/><rect x="950.4" y="391.0" width="309.4" height="65.20" rx="5" fill="#262626" stroke="#9c9c9c" stroke-width="1"/><rect x="950.4" y="463.0" width="309.4" height="65.25" rx="5" fill="#262626" stroke="#9c9c9c" stroke-width="1"/><rect x="950.4" y="535.4" width="309.4" height="49.90" rx="5" fill="#262626" stroke="#9c9c9c" stroke-width="1"/><rect x="950.4" y="591.8" width="309.4" height="65.50" rx="5" fill="#262626" stroke="#9c9c9c" stroke-width="1"/><rect x="950.4" y="663.8" width="309.4" height="95.20" rx="5" fill="#262626" stroke="#9c9c9c" stroke-width="1"/><rect x="950.4" y="765.7" width="309.4" height="64.30" rx="5" fill="#262626" stroke="#9c9c9c" stroke-width="1"/></svg>
<span class="t" style="left:958.50px;top:233px;font-size:11.5px;font-weight:bold;font-style:italic;transform:scaleX(1.0622);transform-origin:0 0;color:#f0f0f0;">Mangold, Anna-Katharina</span>
<div class="badge" style="left:1115px;top:228.2px;width:61.00px;background:#e6e9fb"></div>
<span class="t" style="left:1119.40px;top:233px;font-size:8.9px;transform:scaleX(0.9385);transform-origin:0 0;color:#3f4f9c;">Aufsatz - ZRP</span>
<span class="t" style="left:958.50px;top:252px;font-size:11.4px;transform:scaleX(1.1518);transform-origin:0 0;-webkit-text-stroke:0.2px;color:#e6e6e6;">Menschenrechtlich gebotene geschlecht-</span>
<span class="t" style="left:958.50px;top:267px;font-size:11.4px;transform:scaleX(1.1372);transform-origin:0 0;-webkit-text-stroke:0.2px;color:#e6e6e6;">liche Selbstbestimmung</span>
<svg width="1280" height="800" viewBox="0 0 1280 800" fill="none"><rect x="958.5" y="287" width="76" height="15" rx="7.5" fill="#454545" stroke="#d6d6d6" stroke-width="1.15"/></svg>
<span class="t" style="left:962.60px;top:292px;font-size:7.8px;color:#9a9a9a;">S.</span>
<span class="t" style="left:958.50px;top:331px;font-size:11.5px;font-weight:bold;font-style:italic;transform:scaleX(1.0484);transform-origin:0 0;color:#f0f0f0;">BVerfG</span>
<div class="badge" style="left:1007.9px;top:326.3px;width:46.85px;background:#fbe6ec"></div>
<span class="t" style="left:1012.75px;top:331px;font-size:8.9px;transform:scaleX(0.9270);transform-origin:0 0;color:#a4486a;">Beschluss</span>
<span class="t" style="left:958.50px;top:349px;font-size:11.4px;transform:scaleX(1.1038);transform-origin:0 0;-webkit-text-stroke:0.2px;color:#e6e6e6;">Beschluss des Ersten Senats vom 10.</span>
<span class="t" style="left:958.50px;top:365px;font-size:11.4px;transform:scaleX(1.0937);transform-origin:0 0;-webkit-text-stroke:0.2px;color:#e6e6e6;">Oktober 2017 - 1 BvR 2019/16</span>
<span class="t" style="left:958.50px;top:403px;font-size:11.5px;font-weight:bold;font-style:italic;transform:scaleX(1.0029);transform-origin:0 0;color:#f0f0f0;">EGMR</span>
<div class="badge" style="left:1002.1px;top:398.3px;width:29.10px;background:#fbeee4"></div>
<span class="t" style="left:1006.40px;top:403px;font-size:8.9px;transform:scaleX(0.9750);transform-origin:0 0;color:#b0713c;">Urteil</span>
<span class="t" style="left:958.50px;top:422px;font-size:11.4px;transform:scaleX(1.1170);transform-origin:0 0;-webkit-text-stroke:0.2px;color:#e6e6e6;">12.06.2003 - Rechtssache V. K. gegen</span>
<span class="t" style="left:958.50px;top:437px;font-size:11.4px;transform:scaleX(1.1391);transform-origin:0 0;-webkit-text-stroke:0.2px;color:#e6e6e6;">Deutschland (Beschwerde Nr. 35968/97)</span>
<span class="t" style="left:958.50px;top:474px;font-size:11.5px;font-weight:bold;font-style:italic;transform:scaleX(1.0385);transform-origin:0 0;color:#f0f0f0;">Völzmann, Berit</span>
<div class="badge" style="left:1057.9px;top:470.6px;width:55.00px;background:#e6e9fb"></div>
<span class="t" style="left:1062.25px;top:475px;font-size:8.9px;transform:scaleX(0.9621);transform-origin:0 0;color:#3f4f9c;">Aufsatz - JZ</span>
<span class="t" style="left:958.50px;top:493px;font-size:11.4px;transform:scaleX(1.1153);transform-origin:0 0;-webkit-text-stroke:0.2px;color:#e6e6e6;">Postgender im Recht? Zur Kategorie</span>
<span class="t" style="left:958.50px;top:509px;font-size:11.4px;transform:scaleX(1.1320);transform-origin:0 0;-webkit-text-stroke:0.2px;color:#e6e6e6;">„Geschlecht&quot; im Personenstandsrecht</span>
<span class="t" style="left:958.50px;top:546px;font-size:11.5px;font-weight:bold;font-style:italic;transform:scaleX(1.0499);transform-origin:0 0;color:#f0f0f0;">Ainsworth, Claire</span>
<div class="badge" style="left:1066.8px;top:542.4px;width:71.10px;background:#e6e9fb"></div>
<span class="t" style="left:1071.30px;top:547px;font-size:8.9px;transform:scaleX(0.9606);transform-origin:0 0;color:#3f4f9c;">Aufsatz - Nature</span>
<span class="t" style="left:958.50px;top:566px;font-size:11.4px;transform:scaleX(1.1167);transform-origin:0 0;-webkit-text-stroke:0.2px;color:#e6e6e6;">Sex redefined</span>
<span class="t" style="left:958.50px;top:603px;font-size:11.5px;font-weight:bold;font-style:italic;transform:scaleX(0.9952);transform-origin:0 0;color:#f0f0f0;">TGEU</span>
<div class="badge" style="left:998.7px;top:599.2px;width:65.30px;background:#e0f6dd"></div>
<span class="t" style="left:1003.00px;top:604px;font-size:8.9px;transform:scaleX(0.9490);transform-origin:0 0;color:#4c9a48;">Stellungnahme</span>
<span class="t" style="left:958.50px;top:623px;font-size:11.4px;transform:scaleX(1.1031);transform-origin:0 0;-webkit-text-stroke:0.2px;color:#e6e6e6;">Stellungnahme zum SBGG-E (A-Drs.</span>
<span class="t" style="left:958.50px;top:638px;font-size:11.4px;transform:scaleX(1.1160);transform-origin:0 0;-webkit-text-stroke:0.2px;color:#e6e6e6;">20(13)78e)</span>
<span class="t" style="left:958.50px;top:675px;font-size:11.5px;font-weight:bold;font-style:italic;transform:scaleX(1.0417);transform-origin:0 0;color:#f0f0f0;">Bundestag</span>
<div class="badge" style="left:1029.1px;top:671.2px;width:52.90px;background:#e0f6dd"></div>
<span class="t" style="left:1033.00px;top:676px;font-size:8.9px;transform:scaleX(0.9496);transform-origin:0 0;color:#4c9a48;">Drucksache</span>
<span class="t" style="left:958.50px;top:695px;font-size:11.4px;transform:scaleX(1.1274);transform-origin:0 0;-webkit-text-stroke:0.2px;color:#e6e6e6;">Entwurf eines Gesetzes über die</span>
<span class="t" style="left:958.50px;top:710px;font-size:11.4px;transform:scaleX(1.1273);transform-origin:0 0;-webkit-text-stroke:0.2px;color:#e6e6e6;">Selbstbestimmung in Bezug auf den</span>
<span class="t" style="left:958.50px;top:725px;font-size:11.4px;transform:scaleX(1.1337);transform-origin:0 0;-webkit-text-stroke:0.2px;color:#e6e6e6;">Geschlechtseintrag und zur Änderung</span>
<span class="t" style="left:958.50px;top:740px;font-size:11.4px;transform:scaleX(1.1628);transform-origin:0 0;-webkit-text-stroke:0.2px;color:#e6e6e6;">weiterer Vorschriften - Drucksache 20/9049</span>
<span class="t" style="left:958.50px;top:773px;font-size:11.5px;font-weight:bold;font-style:italic;transform:scaleX(1.1635);transform-origin:0 0;color:#f0f0f0;">Lange/Pirotta</span>
<div class="badge" style="left:1051.2px;top:770.2px;width:51.40px;background:#e6e9fb"></div>
<span class="t" style="left:1055.60px;top:775px;font-size:8.9px;transform:scaleX(0.9243);transform-origin:0 0;color:#3f4f9c;">Kommentar</span>
<svg width="1280" height="800" viewBox="0 0 1280 800" fill="none" stroke-linecap="round" stroke-linejoin="round"><circle cx="1247.9" cy="198.4" r="5.9" stroke="#e6e6e6" stroke-width="1.1"/><circle cx="1247.90" cy="192.30" r="1.7" fill="#282828" stroke="#e6e6e6" stroke-width="1"/><circle cx="1253.18" cy="195.35" r="1.7" fill="#282828" stroke="#e6e6e6" stroke-width="1"/><circle cx="1253.18" cy="201.45" r="1.7" fill="#282828" stroke="#e6e6e6" stroke-width="1"/><circle cx="1247.90" cy="204.50" r="1.7" fill="#282828" stroke="#e6e6e6" stroke-width="1"/><circle cx="1242.62" cy="201.45" r="1.7" fill="#282828" stroke="#e6e6e6" stroke-width="1"/><circle cx="1242.62" cy="195.35" r="1.7" fill="#282828" stroke="#e6e6e6" stroke-width="1"/><circle cx="1247.9" cy="198.4" r="4.9" fill="#282828"/><circle cx="1247.9" cy="198.4" r="2.7" stroke="#e6e6e6" stroke-width="1.1"/><circle cx="1241" cy="237.5" r="9.6" stroke="#c6c6c6" stroke-width="3.2" fill="none"/><path d="M1241.00 227.90 A9.6 9.6 0 1 1 1232.07 233.97" stroke="#7be028" stroke-width="3.2" fill="none"/><circle cx="1240.8" cy="481.2" r="9.4" stroke="#c4c4c4" stroke-width="3.2" fill="none"/><path d="M1240.80 471.80 A9.4 9.4 0 1 1 1231.40 481.20" stroke="#f5d90a" stroke-width="3.2" fill="none"/><circle cx="1241" cy="781.2" r="9.5" stroke="#c4c4c4" stroke-width="3.2" fill="none"/><path d="M1241.00 771.70 A9.5 9.5 0 0 1 1250.04 784.14" stroke="#f07a12" stroke-width="3.2" fill="none"/><circle cx="1241" cy="337.6" r="7.8" stroke="#f0f0f0" stroke-width="1"/><circle cx="1241" cy="409.7" r="7.8" stroke="#f0f0f0" stroke-width="1"/><circle cx="1241" cy="553.6" r="7.8" stroke="#f0f0f0" stroke-width="1"/><circle cx="1241" cy="610.6" r="7.8" stroke="#f0f0f0" stroke-width="1"/><circle cx="1241" cy="682.6" r="7.8" stroke="#f0f0f0" stroke-width="1"/><circle cx="1241" cy="296.6" r="7.8" stroke="#f0f0f0" stroke-width="1"/><path d="M1237.6 296.6 H1244.4 M1241 293.2 V300" stroke="#f0f0f0" stroke-width="1.1"/><path d="M1002.6 300 L1002.6 312.2 L1005.4 309.6 L1007.4 314 L1009.2 313.2 L1007.2 308.9 L1010.8 308.7 Z" fill="#111" stroke="#f4f4f4" stroke-width="0.9" stroke-linejoin="miter"/></svg>
<span class="t" style="left:1239.30px;top:335px;font-size:6.4px;font-weight:bold;color:#f0f0f0;">4</span>
<span class="t" style="left:1239.30px;top:407px;font-size:6.4px;font-weight:bold;color:#f0f0f0;">7</span>
<span class="t" style="left:1239.30px;top:551px;font-size:6.4px;font-weight:bold;color:#f0f0f0;">2</span>
<span class="t" style="left:1239.30px;top:608px;font-size:6.4px;font-weight:bold;color:#f0f0f0;">1</span>
<span class="t" style="left:1239.30px;top:680px;font-size:6.4px;font-weight:bold;color:#f0f0f0;">8</span>
<span class="t" style="left:1239.10px;top:479px;font-size:6.4px;font-weight:bold;color:#f0f0f0;">2</span>
<div class="a" style="left:0;top:777px;width:1280px;height:23px;background:linear-gradient(#4b4b4b,#363636);border-top:1px solid #101010"></div>
<div class="a" style="left:921.5px;top:778px;width:36px;height:22px;background:linear-gradient(#666,#525252)"></div>
<span class="t" style="left:24.25px;top:783px;font-size:12.3px;letter-spacing:-0.031px;-webkit-text-stroke:0.2px;color:#e2e2e2;">Seite 10 von 21</span>
<span class="t" style="left:130.50px;top:783px;font-size:12.3px;letter-spacing:0.207px;-webkit-text-stroke:0.2px;color:#e2e2e2;">10443 Wörter</span>
<span class="t" style="left:261.25px;top:783px;font-size:12.3px;letter-spacing:0.222px;-webkit-text-stroke:0.2px;color:#e2e2e2;">Deutsch (Deutschland)</span>
<span class="t" style="left:431.25px;top:783px;font-size:12.3px;letter-spacing:0.127px;-webkit-text-stroke:0.2px;color:#e2e2e2;">Barrierefreiheit: Keine Probleme</span>
<span class="t" style="left:877.00px;top:783px;font-size:12.3px;letter-spacing:0.000px;-webkit-text-stroke:0.2px;color:#e2e2e2;">Fokus</span>
<span class="t" style="left:1220.00px;top:783px;font-size:12.3px;letter-spacing:0.085px;-webkit-text-stroke:0.2px;color:#e2e2e2;">136 %</span>
<svg width="1280" height="800" viewBox="0 0 1280 800" fill="none" stroke="#ececec" stroke-width="1.1" stroke-linecap="round" stroke-linejoin="round"><path d="M234 782.8 V794.6 M234 783.1 H227.5 V792.4 H234 M234 783.1 H236.8 M234 792.4 H240.8 V791.2 M237.8 785.6 L242.2 790.2 M242.2 785.6 L237.8 790.2" stroke-width="1.15" stroke-linecap="butt" stroke-linejoin="miter"/><circle cx="418" cy="783.6" r="1.8"/><path d="M412.2 785.2 C413.6 787.2 416 786.6 418 786.6 C420 786.6 422.4 787.2 423.8 785.2 M415.8 787 V790.6 C415.8 792.6 413.6 793 414 795.2 M420.4 787 V789.4 M419.2 792.6 L421.4 794.8 L426 790"/><rect x="853.6" y="783.7" width="13.8" height="9.8" rx="1.2" stroke-width="1.3"/><path d="M856.4 787.6 V786.2 H858.6 M862.4 786.2 H864.6 V787.6 M864.6 789.6 V791 H862.4 M858.6 791 H856.4 V789.6" stroke-width="1.3"/><rect x="932.6" y="782.8" width="14" height="11.8" rx="1.4" stroke-width="1.2"/><path d="M934.8 784.9 H944.4 M934.8 786.9 H944.4 M934.8 788.9 H944.4 M934.8 790.9 H944.4 M934.8 792.8 H944.4" stroke-width="1.15" stroke-linecap="butt"/><path d="M979.6 786 V784 a1 1 0 0 0 -1 -1 H968.6 a1 1 0 0 0 -1 1 V792.4 a1 1 0 0 0 1 1 H973.6 M969.6 785.4 H977.6 M969.6 787.6 H975 M969.6 789.8 H973.4 M969.6 791.6 H972.8" stroke-width="1"/><circle cx="979.6" cy="791" r="4.2" fill="#e2e2e2" stroke="none"/><path d="M976.4 789.6 H982.8 M976.4 792.4 H982.8 M979.6 787 C978 789 978 793 979.6 795 M979.6 787 C981.2 789 981.2 793 979.6 795" stroke="#3a3a3a" stroke-width="0.7"/><path d="M1003.6 784 H1013.2 M1008 786.6 H1018.8 M1010.8 789 H1018.8 M1008 791.4 H1018.8 M1005.4 793.8 H1016" stroke-width="1.3"/><path d="M1040 784 H1053.6 M1040 786.6 H1053.6 M1040 789 H1051 M1040 791.4 H1053.6 M1040 793.8 H1049.2" stroke-width="1.3"/><path d="M1073.6 788.4 H1080.4" stroke-width="1.8"/><path d="M1195.4 788.4 H1202.6 M1199 784.8 V792" stroke-width="1.8"/><rect x="1088" y="786.4" width="100" height="4.4" rx="2.2" fill="#6c6c6c" stroke="none"/><rect x="1133" y="781.8" width="18" height="13.6" rx="6.8" fill="#dedede" stroke="none"/></svg>
</body></html>
